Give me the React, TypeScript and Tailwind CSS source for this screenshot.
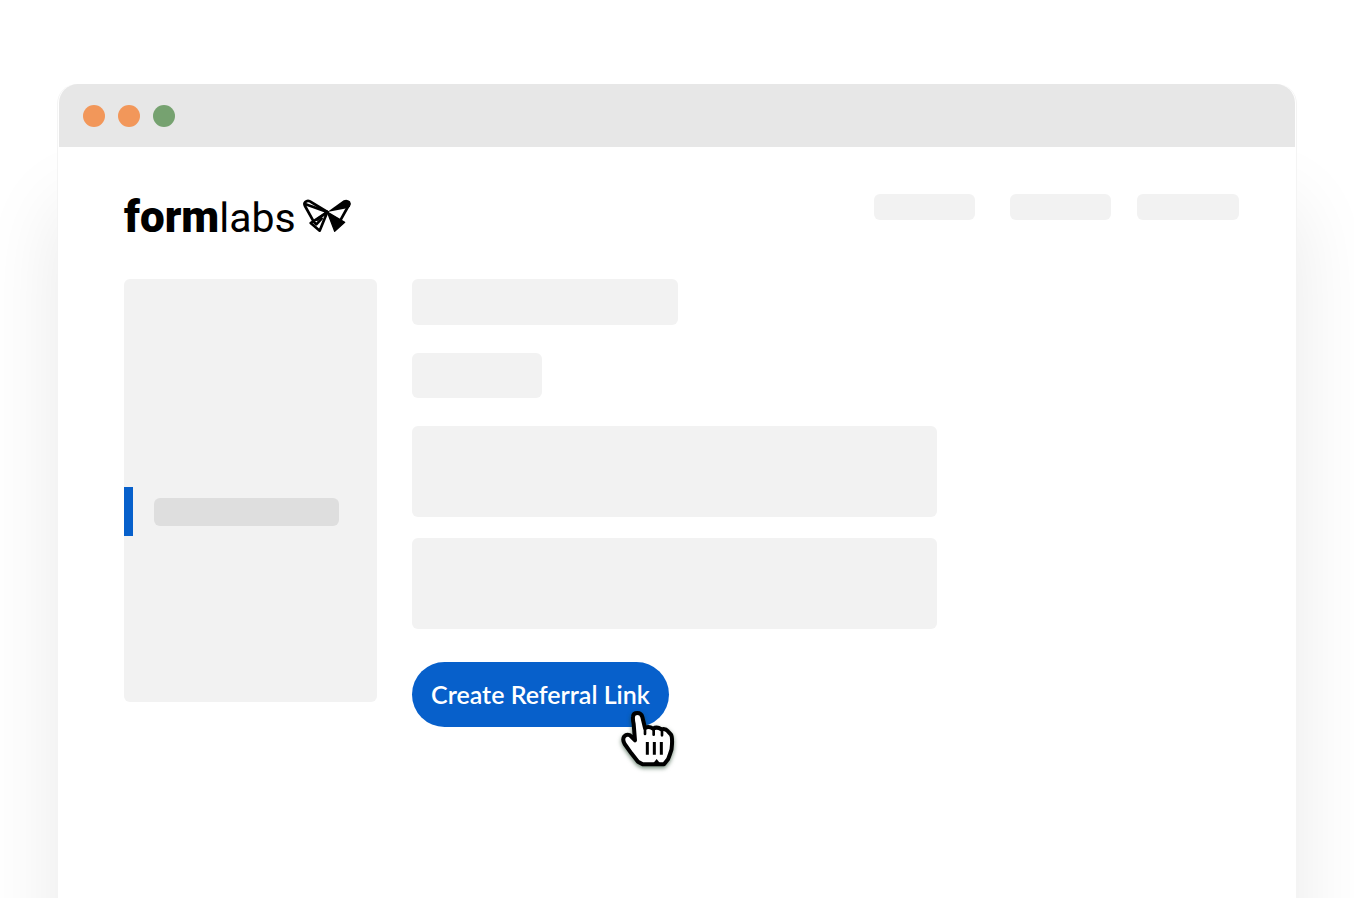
function ButterflyMark() {
  return (
    <svg viewBox="0 0 195 150" className="-ml-px h-[50px] w-[65px] shrink-0" aria-hidden="true">
      <g fill="none" stroke="#000" strokeWidth="8" strokeLinejoin="round" strokeLinecap="round">
        <path d="M97 66 L45 34 Q37 30 31 36 Q26 41 30 48 L54 91" />
        <path d="M32 43 L97 66 L66 89" />
        <path d="M97 66 L47 99 L74 122 Z" />
        <path d="M56 95 L64 103 L80 86" />
        <path d="M160 48 L136 91" />
      </g>
      <path d="M97 66 L146 31 Q156 26 165 34 Q170 41 165 49 L160 54 Z" fill="#000" />
      <path d="M97 66 L149 97 L119 124 Z" fill="#000" stroke="#000" strokeWidth="4" strokeLinejoin="round" />
    </svg>
  );
}

function HandCursor() {
  return (
    <svg
      viewBox="0 0 225 240"
      className="pointer-events-none absolute top-[38px] left-[200px] h-20 w-[75px] drop-shadow-[0_2px_2px_rgba(20,60,30,0.6)]"
      aria-hidden="true"
    >
      <path
        d="M63 50 Q64 39 76 39 Q88 39 91 51 L99 84 Q110 77 123 86 Q135 79 148 88 Q160 84 168 94 L177 104 Q181 110 180 132 Q180 150 174 162 L168 178 L156 193 H92 L78 185 L58 160 L38 132 Q30 118 37 109 Q44 101 54 106 L69 121 L65 72 Q62 58 63 50 Z"
        fill="#fff"
        stroke="#000"
        strokeWidth="12"
        strokeLinejoin="round"
      />
      <g stroke="#000" fill="none">
        <path d="M99 84 V102 M125 86 V104 M150 90 V106" strokeLinecap="round" strokeWidth="8" />
        <path d="M106 126 V164 M127 126 V164 M148 126 V164" strokeWidth="9" />
      </g>
      <path d="M122 192 L134 177 L146 192 Z" fill="#000" />
    </svg>
  );
}

export default function App() {
  return (
    <div className="flex min-h-screen flex-col overflow-hidden bg-white px-[57px] pt-[84px]">
      <div className="flex flex-1 flex-col rounded-t-[20px] border-x border-[#f4f4f4] bg-white px-px shadow-[0_120px_80px_rgba(0,0,0,0.09)]">
        <div className="flex h-[63px] items-center gap-[13px] rounded-t-[19px] bg-[#e7e7e7] pl-6">
          <span className="size-[22px] rounded-full bg-[#f2975a]" />
          <span className="size-[22px] rounded-full bg-[#f2975a]" />
          <span className="size-[22px] rounded-full bg-[#76a270]" />
        </div>

        <header className="flex items-start justify-between pt-[43px] pr-14 pl-[65px]">
          <a
            href="#home"
            aria-label="formlabs"
            className="flex h-[50px] items-start font-['Roboto',sans-serif] text-black"
          >
            <span className="flex items-baseline pt-0.5 leading-[50px]">
              <span className="text-[44px] font-black">form</span>
              <span className="text-[41px] font-normal">labs</span>
            </span>
            <ButterflyMark />
          </a>
          <nav className="flex pt-1">
            <span className="mr-[35px] h-[26px] w-[101px] rounded-md bg-[#f2f2f2]" />
            <span className="mr-[26px] h-[26px] w-[101px] rounded-md bg-[#f2f2f2]" />
            <span className="h-[26px] w-[102px] rounded-md bg-[#f2f2f2]" />
          </nav>
        </header>

        <div className="flex items-start gap-[35px] pt-[39px] pr-14 pb-20 pl-[65px]">
          <aside className="w-[253px] shrink-0 rounded-md bg-[#f2f2f2] pt-52 pb-[166px]">
            <div className="flex h-[49px] items-center border-l-[9px] border-[#0760cb] pl-[21px]">
              <span className="h-7 w-[185px] rounded-md bg-[#dedede]" />
            </div>
          </aside>

          <main className="flex w-full max-w-[525px] flex-col items-start">
            <div className="h-[46px] w-[266px] rounded-md bg-[#f2f2f2]" />
            <div className="mt-7 h-[45px] w-[130px] rounded-md bg-[#f2f2f2]" />
            <div className="mt-7 h-[91px] w-full rounded-md bg-[#f2f2f2]" />
            <div className="mt-[21px] h-[91px] w-full rounded-md bg-[#f2f2f2]" />
            <div className="relative mt-[33px]">
              <button
                type="button"
                className="h-[65px] w-[257px] cursor-pointer rounded-full bg-[#0760cb] font-['Lato',sans-serif] text-[25px] font-semibold whitespace-nowrap text-white"
              >
                Create Referral Link
              </button>
              <HandCursor />
            </div>
          </main>
        </div>
      </div>
    </div>
  );
}
